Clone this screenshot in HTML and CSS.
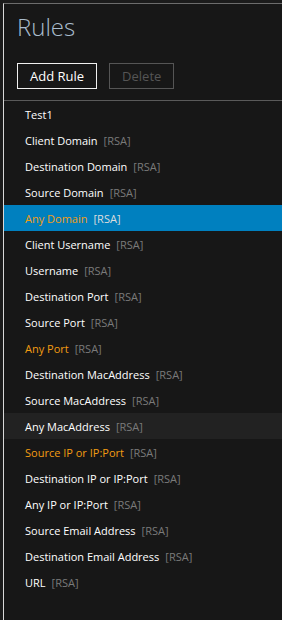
FILE: index.html
```html
<!DOCTYPE html>
<html lang="en">
<head>
    <meta charset="UTF-8">
    <meta name="viewport" content="width=device-width, initial-scale=1.0">
    <title>Rules</title>
    <link rel="stylesheet" href="styles.css">
</head>
<body>
    <div class="panel">
        <div class="header">Rules</div>
        <div class="toolbar">
            <button class="btn">Add Rule</button>
            <button class="btn disabled">Delete</button>
        </div>
        <ul class="rule-list">
            <li class="rule"><span class="name">Test1</span></li>
            <li class="rule"><span class="name">Client Domain</span><span class="tag">[RSA]</span></li>
            <li class="rule"><span class="name">Destination Domain</span><span class="tag">[RSA]</span></li>
            <li class="rule"><span class="name">Source Domain</span><span class="tag">[RSA]</span></li>
            <li class="rule selected any"><span class="name">Any Domain</span><span class="tag">[RSA]</span></li>
            <li class="rule"><span class="name">Client Username</span><span class="tag">[RSA]</span></li>
            <li class="rule"><span class="name">Username</span><span class="tag">[RSA]</span></li>
            <li class="rule"><span class="name">Destination Port</span><span class="tag">[RSA]</span></li>
            <li class="rule"><span class="name">Source Port</span><span class="tag">[RSA]</span></li>
            <li class="rule any"><span class="name">Any Port</span><span class="tag">[RSA]</span></li>
            <li class="rule"><span class="name">Destination MacAddress</span><span class="tag">[RSA]</span></li>
            <li class="rule"><span class="name">Source MacAddress</span><span class="tag">[RSA]</span></li>
            <li class="rule hover"><span class="name">Any MacAddress</span><span class="tag">[RSA]</span></li>
            <li class="rule any"><span class="name">Source IP or IP:Port</span><span class="tag">[RSA]</span></li>
            <li class="rule"><span class="name">Destination IP or IP:Port</span><span class="tag">[RSA]</span></li>
            <li class="rule"><span class="name">Any IP or IP:Port</span><span class="tag">[RSA]</span></li>
            <li class="rule"><span class="name">Source Email Address</span><span class="tag">[RSA]</span></li>
            <li class="rule"><span class="name">Destination Email Address</span><span class="tag">[RSA]</span></li>
            <li class="rule"><span class="name">URL</span><span class="tag">[RSA]</span></li>
        </ul>
    </div>
</body>
</html>
```

FILE: styles.css
```css
html, body {
    height: 100%;
}
body {
    margin: 0;
    background: #1b1b1b;
    font-family: "Open Sans", "Noto Sans", sans-serif;
    overflow: hidden;
}
.panel {
    margin: 3px 0 0 3px;
    height: calc(100% - 4px);
    background: #171717;
    border-top: 1px solid #6c6c6c;
    border-left: 1px solid #d8d8d8;
}
.header {
    padding: 7px 0 0 13px;
    height: 36px;
    font-size: 24px;
    font-weight: 300;
    color: #a9bccd;
    line-height: 32px;
}
.toolbar {
    display: flex;
    gap: 12px;
    padding: 16px 0 0 13px;
    height: 37px;
    border-bottom: 1px solid #5a5a5a;
}
.btn {
    height: 26px;
    padding: 0 12px;
    background: transparent;
    border: 1px solid #f0f0f0;
    color: #ffffff;
    font-family: inherit;
    font-size: 13px;
    cursor: pointer;
}
.btn.disabled {
    border-color: #555;
    color: #555;
}
.rule-list {
    list-style: none;
    margin: 0;
    padding: 0;
}
.rule {
    display: flex;
    align-items: center;
    gap: 6px;
    height: 26px;
    padding-left: 21px;
    font-size: 11px;
    color: #ffffff;
}
.rule .tag {
    color: #7a7a7a;
}
.rule.any .name {
    color: #f39c12;
}
.rule.selected {
    background: #0080bf;
}
.rule.selected .tag {
    color: #dddddd;
}
.rule.hover {
    background: #222222;
}
```
